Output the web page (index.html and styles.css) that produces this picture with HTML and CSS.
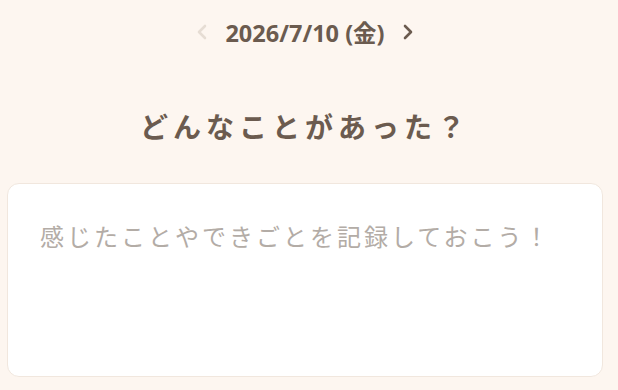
FILE: index.html
```html
<!DOCTYPE html><html lang="ja">
<head>
  <meta charset="UTF-8">
  <title>日記</title>
  <link rel="stylesheet" href="styles.css">
</head>
<body>
  <div class="page">
    <div class="date-nav">
      <button class="arrow disabled" aria-label="前の日">
        <svg width="14" height="18" viewBox="0 0 14 18"><path d="M10 3 L4 9 L10 15" fill="none" stroke="currentColor" stroke-width="2.6" stroke-linecap="round" stroke-linejoin="round"/></svg>
      </button>
      <div class="date">2026/7/10 (金)</div>
      <button class="arrow" aria-label="次の日">
        <svg width="14" height="18" viewBox="0 0 14 18"><path d="M4 3 L10 9 L4 15" fill="none" stroke="currentColor" stroke-width="2.6" stroke-linecap="round" stroke-linejoin="round"/></svg>
      </button>
    </div>
    <h1 class="question">どんなことがあった？</h1>
    <textarea class="memo" placeholder="感じたことやできごとを記録しておこう！"></textarea>
  </div>
</body>
</html>
```

FILE: styles.css
```css
* {
  margin: 0;
  padding: 0;
  box-sizing: border-box;
  font-family: "Noto Sans", "Noto Sans CJK JP", sans-serif;
}

body {
  background-color: #fdf6f0;
  color: #6b5b4f;
}

.page {
  display: flex;
  flex-direction: column;
  align-items: center;
  padding: 14px 15px 0 7px;
}

.date-nav {
  display: flex;
  align-items: center;
  gap: 16px;
  height: 36px;
}

.arrow {
  border: none;
  background: none;
  color: #6b5b4f;
  display: flex;
  align-items: center;
  cursor: pointer;
}

.arrow.disabled {
  color: #e6ddd4;
  cursor: default;
}

.date {
  font-size: 23.5px;
  font-weight: bold;
}

.question {
  margin-top: 57px;
  font-size: 28px;
  font-weight: bold;
  letter-spacing: 5px;
  line-height: 40px;
}

.memo {
  margin-top: 36px;
  width: 100%;
  height: 194px;
  background-color: #fff;
  border: 1px solid #f1e7de;
  border-radius: 12px;
  padding: 34px 32px;
  font-size: 24px;
  letter-spacing: 3px;
  color: #6b5b4f;
  resize: none;
  outline: none;
}

.memo::placeholder {
  color: #b3aca6;
}
```
